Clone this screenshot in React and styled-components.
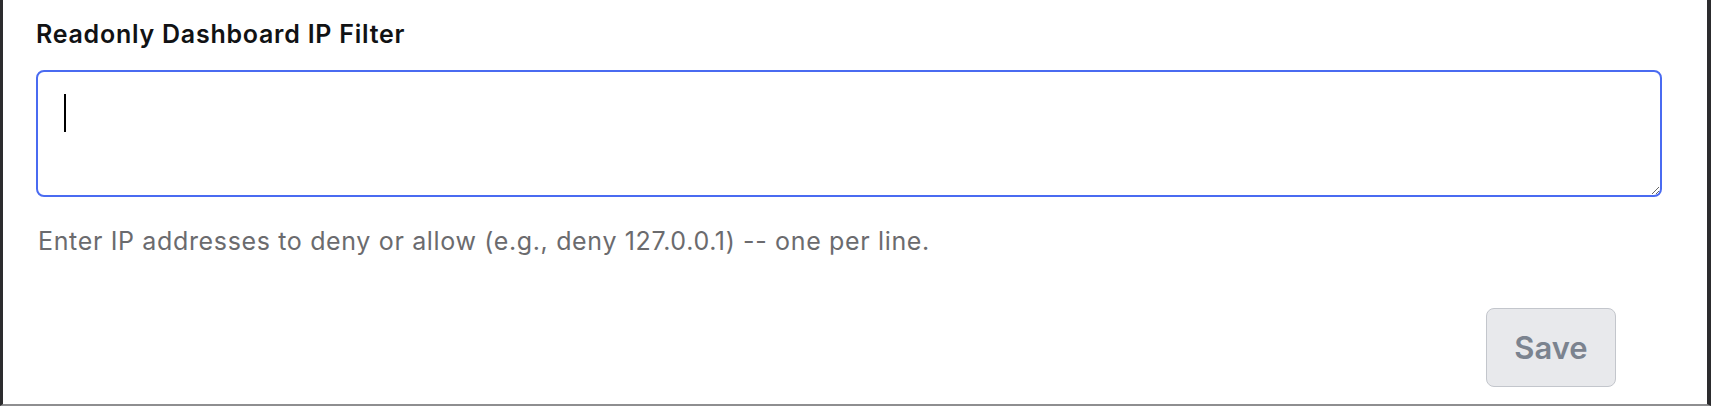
import React from "react";
import styled, { createGlobalStyle } from "styled-components";

const GlobalStyle = createGlobalStyle`
  html, body {
    margin: 0;
    padding: 0;
    background: #ffffff;
  }
  body {
    font-family: Inter, "Noto Sans", "Liberation Sans", sans-serif;
    -webkit-font-smoothing: antialiased;
  }
`;

const Frame = styled("div")`
  box-sizing: border-box;
  height: 406px;
  border-left: 3px solid #2c2c2e;
  border-right: 4px solid #2c2c2e;
  border-bottom: 2px solid #8e8e90;
  background: #ffffff;
  padding: 19px 45px 0 33px;
  display: flex;
  flex-direction: column;
`;

const Label = styled("label")`
  display: block;
  font-size: 25px;
  line-height: 30px;
  font-weight: 600;
  color: #111214;
  letter-spacing: 0.75px;
`;

const Field = styled("div")`
  position: relative;
  margin-top: 21px;
`;

const TextArea = styled("textarea")`
  display: block;
  box-sizing: border-box;
  width: 100%;
  height: 127px;
  padding: 22px 26px;
  border: 2px solid #4a6bf1;
  border-radius: 8px;
  outline: none;
  background: #ffffff;
  font-family: inherit;
  font-size: 30px;
  color: #111;
  caret-color: transparent;
  resize: vertical;
`;

const Caret = styled("span")`
  position: absolute;
  left: 28px;
  top: 24px;
  width: 2px;
  height: 38px;
  background: #000000;
  pointer-events: none;
`;

const Help = styled("p")`
  margin: 29px 0 0 2px;
  font-size: 25px;
  line-height: 30px;
  color: #6b6b6e;
  letter-spacing: 0.65px;
`;

const Actions = styled("div")`
  display: flex;
  justify-content: flex-end;
  margin-top: 52px;
  padding-right: 46px;
`;

const SaveButton = styled("button")`
  box-sizing: border-box;
  width: 130px;
  height: 79px;
  border: 1.5px solid #c3c6cc;
  border-radius: 8px;
  background: #e8e9ec;
  color: #7b838f;
  font-family: inherit;
  font-size: 31px;
  font-weight: 600;
  cursor: default;
`;

export default function App() {
  return (
    <>
      <GlobalStyle />
      <Frame>
        <Label htmlFor="readonly-ip-filter">Readonly Dashboard IP Filter</Label>
        <Field>
          <TextArea id="readonly-ip-filter" />
          <Caret />
        </Field>
        <Help>Enter IP addresses to deny or allow (e.g., deny 127.0.0.1) -- one per line.</Help>
        <Actions>
          <SaveButton disabled>Save</SaveButton>
        </Actions>
      </Frame>
    </>
  );
}
